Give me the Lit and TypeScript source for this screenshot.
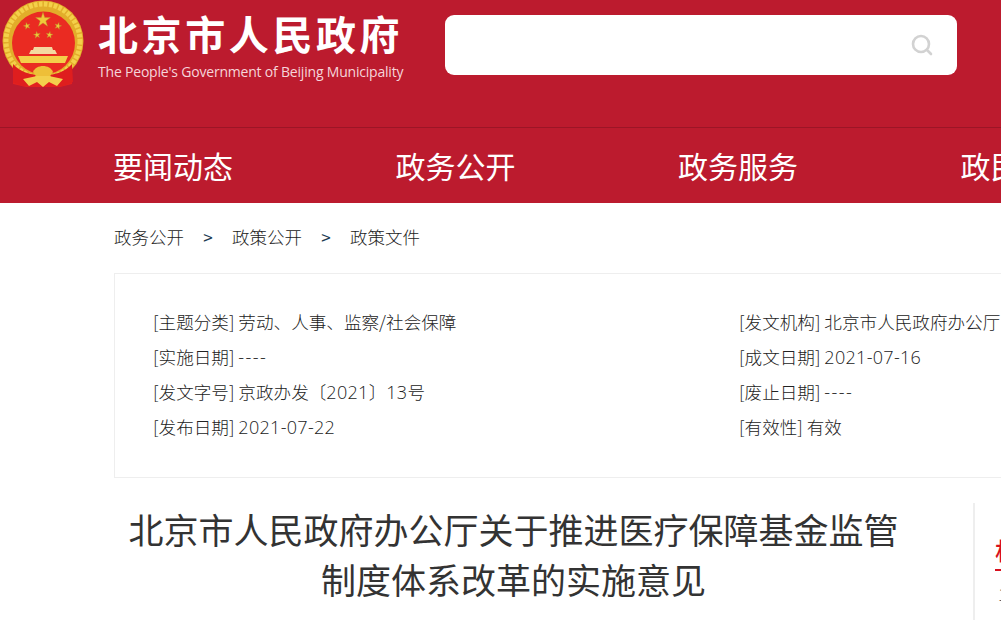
import { LitElement, html, css, svg } from "lit";
import { customElement } from "lit/decorators.js";

const star = (cx: number, cy: number, r: number, rot = 0) => {
  const pts: string[] = [];
  for (let i = 0; i < 10; i++) {
    const rad = i % 2 ? r * 0.382 : r;
    const a = ((-90 + rot + i * 36) * Math.PI) / 180;
    pts.push(`${(cx + rad * Math.cos(a)).toFixed(2)},${(cy + rad * Math.sin(a)).toFixed(2)}`);
  }
  return svg`<polygon points=${pts.join(" ")} fill="#efc93a" stroke="#b98f2a" stroke-width=".4"/>`;
};

const emblem = html`<svg class="emblem" width="86" height="90" viewBox="0 0 86 90">
  <path d="M13 62 L72 62 L72 84 L60 87 L26 87 L13 84 Z" fill="#e3201f"/>
  <circle cx="43" cy="41" r="40.5" fill="#e2ad2a"/>
  <circle cx="43" cy="41" r="37" fill="none" stroke="#f4d04a" stroke-width="5" stroke-dasharray="3.5 1.5"/>
  <circle cx="43.5" cy="43" r="31.5" fill="#ea2b22"/>
  ${star(43, 20, 7.8)} ${star(27, 26, 3.6, -15)} ${star(58, 26, 3.6, 15)} ${star(37, 35, 3.6, -8)} ${star(49.5, 35, 3.6, 8)}
  <path d="M34 47 H52 L53 50 H55 L57 54 H29 L31 50 H33 Z" fill="#f4d9a0"/>
  <path d="M18 56 H68 L65 63 H21 Z" fill="#f4cf4a"/>
  <path d="M13 64 C20 72 30 74 36 75 L32 84 L23 86 L13 82 Z M72 64 C65 72 55 74 50 75 L54 84 L63 86 L73 82 Z" fill="#df1e1e"/>
  <path d="M33 72 C36 64 50 64 53 72 L50 76 H36 Z" fill="#eebf38"/>
  <path d="M23 79 L37 76 H49 L63 79 L57 86 L49 82 L43 87 L37 82 L29 86 Z" fill="#f3cf4c"/>
</svg>`;

const rows = [
  ["[主题分类]", "劳动、人事、监察/社会保障", "[发文机构]", "北京市人民政府办公厅"],
  ["[实施日期]", "----", "[成文日期]", "2021-07-16"],
  ["[发文字号]", "京政办发〔2021〕13号", "[废止日期]", "----"],
  ["[发布日期]", "2021-07-22", "[有效性]", "有效"],
];

@customElement("app-root")
export class AppRoot extends LitElement {
  static styles = css`
    :host {
      display: block;
      width: 1001px;
      height: 620px;
      overflow: hidden;
      background: #fff;
      font-family: "Noto Sans CJK SC", "Noto Sans", sans-serif;
      font-weight: 300;
      color: #222;
    }
    .page { width: 1400px; }
    .top {
      height: 127px;
      background: #bc1b2e;
      border-bottom: 1px solid #9c1526;
      display: flex;
      align-items: flex-start;
    }
    .emblem { display: block; flex: none; }
    .logo-text { margin-left: 12px; width: 347px; flex: none; color: #fff; }
    .logo-cn {
      font-size: 40px;
      line-height: 42px;
      margin-top: 12px;
      font-weight: 700;
      letter-spacing: 3.6px;
      white-space: nowrap;
    }
    .logo-en {
      font-family: "Open Sans", sans-serif;
      font-weight: 400;
      font-size: 14px;
      line-height: 20px;
      margin-top: 8px;
      letter-spacing: -0.2px;
      color: #f6d5da;
      white-space: nowrap;
    }
    .search {
      width: 512px;
      height: 60px;
      margin-top: 15px;
      background: #fff;
      border-radius: 9px;
      display: flex;
      align-items: center;
      justify-content: flex-end;
      padding-right: 24px;
      box-sizing: border-box;
      flex: none;
    }
    .nav {
      height: 75px;
      background: #bc1b2e;
      display: flex;
      align-items: center;
      padding-left: 113px;
    }
    .nav span {
      width: 282.5px;
      flex: none;
      font-size: 30px;
      color: #fff;
      font-weight: 400;
      line-height: 75px;
      white-space: nowrap;
    }
    .crumb {
      display: flex;
      align-items: center;
      height: 70px;
      box-sizing: border-box;
      padding: 0 0 3px 114px;
      font-size: 17.5px;
      color: #222;
    }
    .crumb i {
      font-style: normal;
      color: #1c3a52;
      width: 48px;
      text-align: center;
      font-size: 17px;
      font-weight: 400;
    }
    .info {
      margin-left: 114px;
      width: 1200px;
      height: 205px;
      box-sizing: border-box;
      border: 1px solid #eee;
      padding: 31px 0 0 38px;
      display: grid;
      grid-template-columns: 586px 1fr;
      grid-auto-rows: 35px;
      font-size: 17.6px;
      line-height: 34px;
    }
    .info div { white-space: nowrap; }
    .num {
      font-family: "Open Sans", sans-serif;
      font-size: 18px;
      letter-spacing: 0.3px;
    }
    .dash {
      font-family: "Open Sans", sans-serif;
      font-size: 18px;
      letter-spacing: 1.45px;
    }
    .body { display: flex; padding-left: 114px; }
    .main { width: 799px; flex: none; text-align: center; padding-top: 26px; }
    h1 {
      margin: 0;
      font-size: 35px;
      font-weight: 400;
      line-height: 50px;
      color: #333;
    }
    .side {
      margin-left: 60px;
      margin-top: 25px;
      height: 120px;
      border-left: 2px solid #eee;
      padding-left: 20px;
      flex: none;
      width: 300px;
    }
    .side-title {
      display: inline-block;
      font-size: 24px;
      font-weight: 500;
      color: #d8101e;
      line-height: 36px;
      margin-top: 29px;
      padding-bottom: 1px;
      border-bottom: 2px solid #d8101e;
    }
    .side-item { font-size: 17px; line-height: 26px; padding-left: 3px; color: #333; margin-top: 10px; }
  `;

  private val(v: string) {
    if (v === "----") return html`<span class="dash">${v}</span>`;
    return v
      .split(/([\d-]+)/)
      .map((p) => (/^[\d-]+$/.test(p) ? html`<span class="num">${p}</span>` : p));
  }

  render() {
    return html`<div class="page">
      <div class="top">
        ${emblem}
        <div class="logo-text">
          <div class="logo-cn">北京市人民政府</div>
          <div class="logo-en">The People's Government of Beijing Municipality</div>
        </div>
        <div class="search">
          <svg width="22" height="22" viewBox="0 0 22 22" fill="none" stroke="#d2d2d2" stroke-width="2.6">
            <circle cx="10" cy="10" r="8"/>
            <path d="M16 16 L20 20" stroke-linecap="round"/>
          </svg>
        </div>
      </div>
      <div class="nav">
        <span>要闻动态</span><span>政务公开</span><span>政务服务</span><span>政民互动</span>
      </div>
      <div class="crumb">
        <span>政务公开</span><i>&gt;</i><span>政策公开</span><i>&gt;</i><span>政策文件</span>
      </div>
      <div class="info">
        ${rows.map(
          (r) => html`<div>${r[0]} ${this.val(r[1])}</div><div>${r[2]} ${this.val(r[3])}</div>`
        )}
      </div>
      <div class="body">
        <div class="main">
          <h1>北京市人民政府办公厅关于推进医疗保障基金监管<br />制度体系改革的实施意见</h1>
        </div>
        <div class="side">
          <div class="side-title">相关</div>
          <div class="side-item">1</div>
        </div>
      </div>
    </div>`;
  }
}
